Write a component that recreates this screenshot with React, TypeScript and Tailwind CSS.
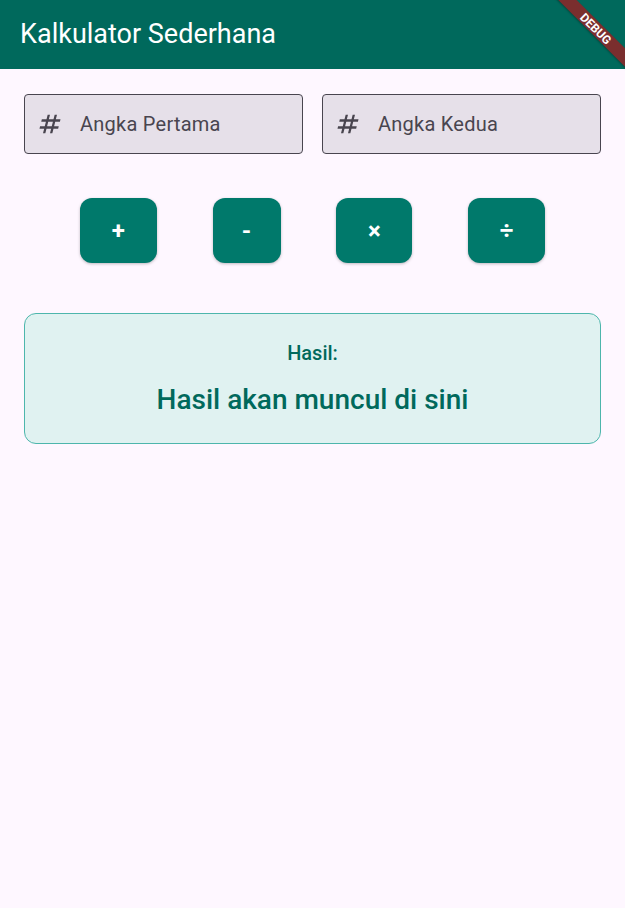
import React from "react";

const ops = [
  { label: "+", w: "w-[77px]" },
  { label: "-", w: "w-[68px]" },
  { label: "×", w: "w-[76px]" },
  { label: "÷", w: "w-[77px]" },
];

const NumbersIcon = () => (
  <svg viewBox="0 0 24 24" className="w-[28px] h-[28px] fill-[#49454F]">
    <path d="M20.5 10L21 8h-4l1-4h-2l-1 4h-4l1-4h-2L9 8H5l-.5 2h4l-1 4h-4L3 16h4l-1 4h2l1-4h4l-1 4h2l1-4h4l.5-2h-4l1-4h4zM13.5 14h-4l1-4h4l-1 4z" />
  </svg>
);

const NumberField = ({ label }: { label: string }) => (
  <div className="flex-1 h-[60px] flex items-center rounded-[4px] border border-[#49454F] bg-[#E6E0E9] pl-[11px]">
    <NumbersIcon />
    <span className="ml-[16px] text-[20px] text-[#49454F] tracking-[0.25px]">{label}</span>
  </div>
);

export default function App() {
  return (
    <div
      className="relative min-h-[908px] bg-[#FEF7FF] overflow-hidden"
      style={{ fontFamily: "Roboto, 'Noto Sans', sans-serif" }}
    >
      <header className="h-[69px] bg-[#00695C] flex items-center px-[20px]">
        <h1 className="text-white text-[27px] leading-none">Kalkulator Sederhana</h1>
      </header>

      <main className="px-[24px] pt-[25px]">
        <div className="flex gap-[19px]">
          <NumberField label="Angka Pertama" />
          <NumberField label="Angka Kedua" />
        </div>

        <div className="flex justify-evenly mt-[44px]">
          {ops.map((op) => (
            <button
              key={op.label}
              className={`${op.w} h-[65px] rounded-[12px] bg-[#00796B] text-white text-[24px] font-bold shadow-[0_1px_3px_rgba(0,0,0,0.25)]`}
            >
              {op.label}
            </button>
          ))}
        </div>

        <div className="mt-[50px] h-[131px] rounded-[12px] border border-[#4DB6AC] bg-[#E0F2F1] flex flex-col items-center pt-[26px]">
          <p className="text-[20px] font-medium text-[#00695C] leading-[26px]">Hasil:</p>
          <p className="mt-[16px] text-[28px] font-medium text-[#00695C] leading-[36px]">
            Hasil akan muncul di sini
          </p>
        </div>
      </main>

      {/* debug ribbon */}
      <div className="absolute left-[536px] top-[22px] w-[120px] h-[13px] rotate-45 bg-[#7A2E2E] flex items-center justify-center shadow-[0_1px_2px_rgba(0,0,0,0.3)]">
        <span className="text-white text-[12px] font-bold leading-none">DEBUG</span>
      </div>
    </div>
  );
}
